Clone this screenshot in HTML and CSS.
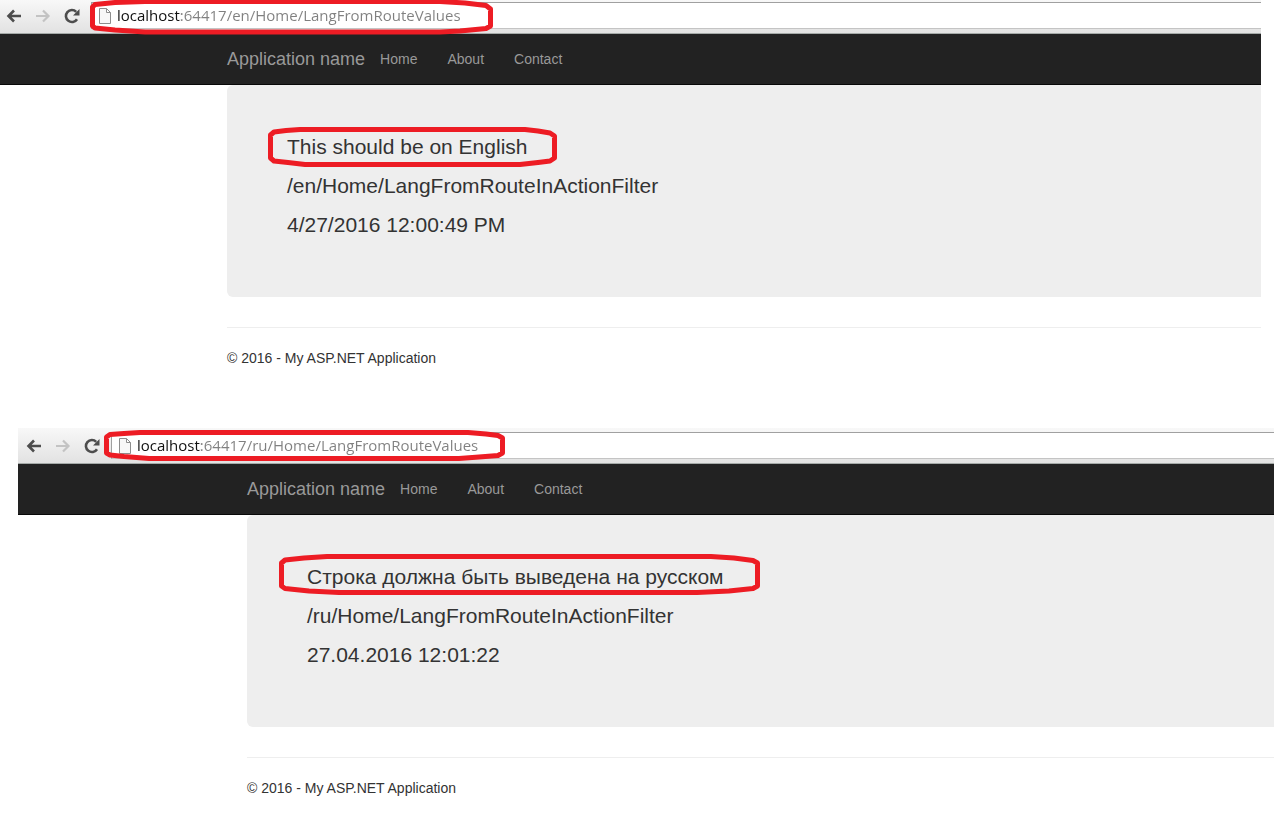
FILE: index.html
```html
<!DOCTYPE html>
<html lang="en">
<head>
    <meta charset="UTF-8">
    <meta name="viewport" content="width=device-width, initial-scale=1.0">
    <title>Lang from route values</title>
    <link rel="stylesheet" href="styles.css">
</head>
<body>
    <!-- english version -->
    <section class="browser browser-en">
        <div class="toolbar">
            <button class="tool" type="button" aria-label="Back">
                <svg width="16" height="14" viewBox="0 0 16 14"><path d="M15 7H3M8 1.5L2.5 7L8 12.5" fill="none" stroke="#4d4d4d" stroke-width="2.6"/></svg>
            </button>
            <button class="tool" type="button" aria-label="Forward" disabled>
                <svg width="16" height="14" viewBox="0 0 16 14"><path d="M1 7H13M8 1.5L13.5 7L8 12.5" fill="none" stroke="#c3c3c3" stroke-width="2.2"/></svg>
            </button>
            <button class="tool" type="button" aria-label="Reload">
                <svg width="16" height="16" viewBox="0 0 16 16"><path d="M13 11.2A6 6 0 1 1 12.2 3.8" fill="none" stroke="#4d4d4d" stroke-width="2.6"/><path d="M15.5 1V7.5H9Z" fill="#4d4d4d"/></svg>
            </button>
            <div class="address">
                <svg class="page-icon" width="12" height="16" viewBox="0 0 12 16"><path d="M.5 .5H7.5L11.5 4.5V15.5H.5ZM7.5 .5V4.5H11.5" fill="#f8f8f8" stroke="#8e8e8e"/></svg>
                <input class="url" type="text" aria-label="Address" value="localhost:64417/en/Home/LangFromRouteValues">
            </div>
            <svg class="mark mark-url" width="403" height="35" viewBox="0 0 403 35"><path d="M2.5 7L5 4.5L25 2.5L55 1.5H350L375 3L396 5.5L400.5 9V26L396 28.5L370 31L350 32H55L25 30L5 28L2.5 26Z"/></svg>
        </div>
        <nav class="navbar">
            <a class="brand" href="#">Application name</a>
            <a href="#">Home</a>
            <a href="#">About</a>
            <a href="#">Contact</a>
        </nav>
        <div class="container">
            <div class="jumbotron">
                <p>This should be on English</p>
                <p>/en/Home/LangFromRouteInActionFilter</p>
                <p>4/27/2016 12:00:49 PM</p>
                <svg class="mark mark-en" width="289" height="40" viewBox="0 0 289 40"><path d="M2.5 8L6 5L18 3.5L32 2.5H257L270 4L282 6L286.5 9V31L282 34L270 35.5L252 37.5H37L20 35.5L6 34L2.5 31Z"/></svg>
            </div>
            <hr>
            <footer>&copy; 2016 - My ASP.NET Application</footer>
        </div>
    </section>

    <!-- russian version -->
    <section class="browser browser-ru">
        <div class="toolbar">
            <button class="tool" type="button" aria-label="Back">
                <svg width="16" height="14" viewBox="0 0 16 14"><path d="M15 7H3M8 1.5L2.5 7L8 12.5" fill="none" stroke="#4d4d4d" stroke-width="2.6"/></svg>
            </button>
            <button class="tool" type="button" aria-label="Forward" disabled>
                <svg width="16" height="14" viewBox="0 0 16 14"><path d="M1 7H13M8 1.5L13.5 7L8 12.5" fill="none" stroke="#c3c3c3" stroke-width="2.2"/></svg>
            </button>
            <button class="tool" type="button" aria-label="Reload">
                <svg width="16" height="16" viewBox="0 0 16 16"><path d="M13 11.2A6 6 0 1 1 12.2 3.8" fill="none" stroke="#4d4d4d" stroke-width="2.6"/><path d="M15.5 1V7.5H9Z" fill="#4d4d4d"/></svg>
            </button>
            <div class="address">
                <svg class="page-icon" width="12" height="16" viewBox="0 0 12 16"><path d="M.5 .5H7.5L11.5 4.5V15.5H.5ZM7.5 .5V4.5H11.5" fill="#f8f8f8" stroke="#8e8e8e"/></svg>
                <input class="url" type="text" aria-label="Address" value="localhost:64417/ru/Home/LangFromRouteValues">
            </div>
            <svg class="mark mark-url" width="401" height="31" viewBox="0 0 401 31"><path d="M2.5 7L6 4.5L20 3.5L36 2.5H364L382 4L394 5.5L398.5 8V23L394 25.5L375 27L355 28.5H45L20 26.5L6 25L2.5 23Z"/></svg>
        </div>
        <nav class="navbar">
            <a class="brand" href="#">Application name</a>
            <a href="#">Home</a>
            <a href="#">About</a>
            <a href="#">Contact</a>
        </nav>
        <div class="container">
            <div class="jumbotron">
                <p lang="ru">Строка должна быть выведена на русском</p>
                <p>/ru/Home/LangFromRouteInActionFilter</p>
                <p>27.04.2016 12:01:22</p>
                <svg class="mark mark-ru" width="481" height="41" viewBox="0 0 481 41"><path d="M2.5 9L6 6L25 4L48 2.5H432L455 4L474 6.5L478.5 9V32L474 34.5L450 37L418 38.5H60L30 37L6 34.5L2.5 32Z"/></svg>
            </div>
            <hr>
            <footer>&copy; 2016 - My ASP.NET Application</footer>
        </div>
    </section>
</body>
</html>
```

FILE: styles.css
```css
* {
    box-sizing: border-box;
}
body {
    margin: 0;
    background: #fff;
    color: #333;
    font-family: "Liberation Sans", Arial, sans-serif;
    font-size: 14px;
    line-height: 20px;
}

/* browser window */
.browser-en {
    --edge: 0px;
    margin: 0 15px 60px 0;
}
.browser-ru {
    --edge: 2px;
    margin: 0 2px 0 18px;
}
.toolbar {
    position: relative;
    display: flex;
    align-items: center;
    padding: calc(2px + var(--edge)) 0 4px calc(6px + var(--edge));
    background: linear-gradient(#f8f8f8, #e2e2e2);
    border-bottom: 1px solid #a5aaa8;
}
.tool {
    display: flex;
    width: 16px;
    margin-right: 13px;
    padding: 0;
    border: 0;
    background: none;
}
.address {
    flex: 1;
    display: flex;
    align-items: center;
    height: 27px;
    margin-left: -2px;
    padding-left: 7px;
    background: #fff;
    border: 1px solid #a0a0a0;
    border-bottom-color: #c4c4c4;
    border-right: 0;
}
.page-icon {
    margin-right: 6px;
}
/* host is black, the rest of the url is grey */
.url {
    flex: 1;
    height: 24px;
    padding: 0 0 2px;
    border: 0;
    outline: 0;
    background: linear-gradient(to right, #111 64px, #808080 64px);
    -webkit-background-clip: text;
    background-clip: text;
    color: transparent;
    font-family: "Open Sans", "Noto Sans", sans-serif;
    font-size: 15px;
}

/* page */
.navbar {
    display: flex;
    align-items: center;
    gap: 30px;
    height: 51px;
    padding-left: calc(227px + var(--edge));
    background: #222;
    border-bottom: 1px solid #080808;
}
.navbar a {
    color: #999;
    text-decoration: none;
}
.navbar .brand {
    margin-right: -15px;
    font-size: 18px;
}
.container {
    margin-left: calc(227px + var(--edge));
}
.jumbotron {
    position: relative;
    padding: 50px 60px 45px;
    background: #eee;
    border-radius: 6px 0 0 6px;
}
.jumbotron p {
    margin: 0 0 15px;
    font-size: 21px;
    line-height: 24px;
}
hr {
    margin: 30px 0 20px;
    border: 0;
    border-top: 1px solid #eee;
}

/* red marker */
.mark {
    position: absolute;
    z-index: 1;
    pointer-events: none;
}
.mark path {
    fill: none;
    stroke: #ed1c24;
    stroke-width: 5px;
    stroke-linejoin: round;
}
.browser-en .mark-url {
    left: 90px;
    top: 0;
}
.browser-ru .mark-url {
    left: 86px;
    top: 2px;
}
.mark-en {
    left: 41px;
    top: 42px;
}
.mark-ru {
    left: 32px;
    top: 39px;
}
```
